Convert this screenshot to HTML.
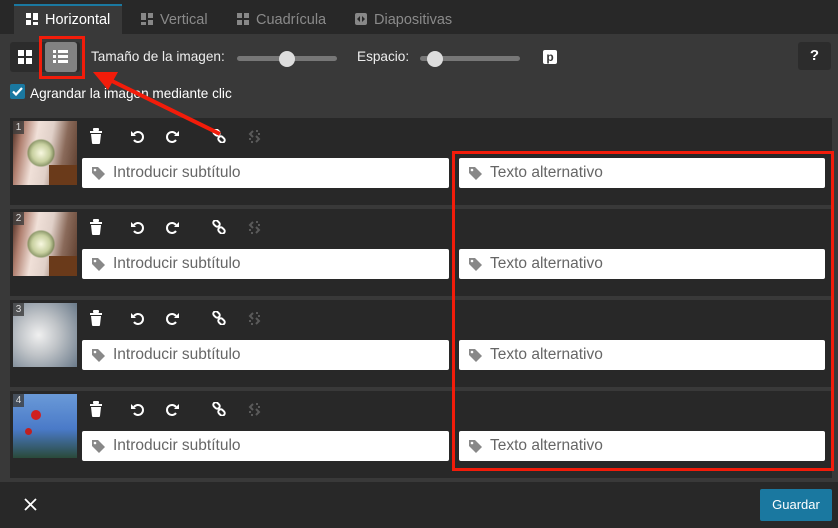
<!DOCTYPE html><html><head><meta charset="utf-8"><style>
*{margin:0;padding:0;box-sizing:border-box}
body{width:838px;height:528px;background:#393939;font-family:"Liberation Sans","DejaVu Sans",sans-serif;position:relative;overflow:hidden;color:#fff}
.a{position:absolute}
.tabbar{left:0;top:0;width:838px;height:34px;background:#282828}
.tab{top:6px;height:28px;font-size:14.5px;color:#8a8a8a;line-height:29px}
.row{left:10px;width:822px;height:87px;background:#282828}
.thumb{width:64px;height:64px;overflow:hidden}
.num{left:0;top:0;width:11px;height:13px;background:rgba(60,60,60,.8);font-size:10px;line-height:13px;text-align:center;color:#ddd}
.inp{height:30px;background:#fff;border-radius:2px;font-size:15.5px;color:#666;line-height:30px;padding-left:31px}
.tag{left:10px;top:9px}
</style></head><body>
<div class="a tabbar"></div>
<div class="a" style="left:14px;top:4px;width:108px;height:30px;background:#393939;border-top:2px solid #1a78a0"></div>
<div class="a tab" style="left:26px;color:#fff"><svg width="12" height="12" style="vertical-align:-1px;margin-right:7px"><rect x="0" y="0" width="5" height="5" fill="#fff"/><rect x="7" y="0" width="5" height="7" fill="#fff"/><rect x="0" y="7" width="5" height="5" fill="#fff"/><rect x="7" y="9" width="5" height="3" fill="#fff"/></svg>Horizontal</div>
<div class="a tab" style="left:141px"><svg width="12" height="12" style="vertical-align:-1px;margin-right:7px"><rect x="0" y="0" width="5" height="7" fill="#888"/><rect x="7" y="0" width="5" height="5" fill="#888"/><rect x="0" y="9" width="5" height="3" fill="#888"/><rect x="7" y="7" width="5" height="5" fill="#888"/></svg>Vertical</div>
<div class="a tab" style="left:237px"><svg width="12" height="12" style="vertical-align:-1px;margin-right:7px"><rect x="0" y="0" width="5" height="5" fill="#888"/><rect x="7" y="0" width="5" height="5" fill="#888"/><rect x="0" y="7" width="5" height="5" fill="#888"/><rect x="7" y="7" width="5" height="5" fill="#888"/></svg>Cuadrícula</div>
<div class="a tab" style="left:355px"><svg width="12" height="12" style="vertical-align:-1px;margin-right:7px"><rect x="0" y="0" width="12" height="12" rx="2" fill="#888"/><path d="M5 3L2 6L5 9ZM7 3L10 6L7 9Z" fill="#282828"/></svg>Diapositivas</div>

<div class="a" style="left:10px;top:42px;width:70px;height:30px;background:#2c2c2c;border-radius:3px"></div>
<svg class="a" style="left:18px;top:50px" width="14" height="14"><rect x="0" y="0" width="6" height="6" fill="#fff"/><rect x="8" y="0" width="6" height="6" fill="#fff"/><rect x="0" y="8" width="6" height="6" fill="#fff"/><rect x="8" y="8" width="6" height="6" fill="#fff"/></svg>
<div class="a" style="left:45px;top:42px;width:32px;height:30px;background:#828282;border-radius:3px"></div>
<svg class="a" style="left:53px;top:50px" width="15" height="14"><g fill="#fff"><rect x="0" y="0" width="3" height="3"/><rect x="0" y="5" width="3" height="3"/><rect x="0" y="10" width="3" height="3"/><rect x="5" y="0" width="10" height="3"/><rect x="5" y="5" width="10" height="3"/><rect x="5" y="10" width="10" height="3"/></g></svg>
<div class="a" style="left:39px;top:36px;width:46px;height:43px;border:3px solid #f21c0a"></div>
<div class="a" style="left:91px;top:49px;font-size:13.6px;color:#eee">Tamaño de la imagen:</div>
<div class="a" style="left:237px;top:56px;width:100px;height:5px;background:#777;border-radius:3px"></div>
<div class="a" style="left:279px;top:51px;width:16px;height:16px;background:#ddd;border-radius:50%"></div>
<div class="a" style="left:357px;top:49px;font-size:13.6px;color:#eee">Espacio:</div>
<div class="a" style="left:420px;top:56px;width:100px;height:5px;background:#777;border-radius:3px"></div>
<div class="a" style="left:427px;top:51px;width:16px;height:16px;background:#ddd;border-radius:50%"></div>
<div class="a" style="left:543px;top:50px;width:14px;height:14px;background:#fff;border-radius:2px;color:#393939;font-size:12px;font-weight:bold;text-align:center;line-height:14px">p</div>
<div class="a" style="left:798px;top:42px;width:33px;height:28px;background:#2c2c2c;border-radius:3px;font-weight:bold;font-size:15px;text-align:center;line-height:28px">?</div>
<div class="a" style="left:10px;top:84px;width:15px;height:15px;background:#1a78a0;border-radius:2px"><svg width="15" height="15"><path d="M3 7.5L6 10.5L12 4" stroke="#fff" stroke-width="2.2" fill="none"/></svg></div>
<div class="a" style="left:30px;top:86px;font-size:13.6px;color:#fff">Agrandar la imagen mediante clic</div>

<div id="rows"></div>
<script>
const imgs=[
"linear-gradient(100deg,#4a2a20 0%,#b08070 15%,#f0e0d8 35%,#e0d0c8 55%,#8a6a5a 75%,#5a3a2a 100%)",
"linear-gradient(100deg,#4a2a20 0%,#b08070 15%,#f0e0d8 35%,#e0d0c8 55%,#8a6a5a 75%,#5a3a2a 100%)",
"radial-gradient(circle at 40% 50%,#f0f0f0 0%,#c0c4c8 40%,#6a7a8a 100%)",
"linear-gradient(180deg,#6a9ad8 0%,#4a7ac8 55%,#2a4a3a 100%)"];
let h='';
for(let i=0;i<4;i++){
 const y=118+i*91;
 h+=`<div class="a row" style="top:${y}px"></div>
 <div class="a thumb" style="left:13px;top:${y+3}px;background:${imgs[i]}">${i<2?'<div class="a" style="left:14px;top:18px;width:28px;height:28px;background:radial-gradient(#f8f8e0,#c8d0a0 45%,rgba(90,120,50,.6) 65%,transparent 72%)"></div><div class="a" style="left:36px;top:44px;width:28px;height:20px;background:#6a3a1a"></div>':''}${i==3?'<div class="a" style="left:18px;top:16px;width:10px;height:10px;background:#d02020;border-radius:50%"></div><div class="a" style="left:12px;top:34px;width:7px;height:7px;background:#c02020;border-radius:50%"></div>':''}<div class="a num">${i+1}</div></div>
 <svg class="a" style="left:90px;top:${y+10}px" width="12" height="16"><rect x="3" y="0" width="6" height="3" rx="1" fill="#fff"/><rect x="0" y="3" width="12" height="2" fill="#fff"/><path d="M1 6H11L10 15Q10 16 9 16H3Q2 16 2 15Z" fill="#fff"/></svg>
 <svg class="a" style="left:131px;top:${y+12}px" width="13" height="13"><path d="M3 4A5 5 0 1 1 3 10" stroke="#fff" stroke-width="2" fill="none"/><path d="M0 1L0 6L5 6Z" fill="#fff"/></svg>
 <svg class="a" style="left:166px;top:${y+12}px" width="13" height="13"><path d="M10 4A5 5 0 1 0 10 10" stroke="#fff" stroke-width="2" fill="none"/><path d="M13 1L13 6L8 6Z" fill="#fff"/></svg>
 <svg class="a" style="left:212px;top:${y+11}px" width="14" height="14"><rect x="1" y="1" width="7" height="5" rx="2.5" transform="rotate(45 4.5 3.5)" stroke="#fff" stroke-width="2" fill="none"/><rect x="6" y="8" width="7" height="5" rx="2.5" transform="rotate(45 9.5 10.5)" stroke="#fff" stroke-width="2" fill="none"/></svg>
 <svg class="a" style="left:247px;top:${y+11}px" width="15" height="15"><path d="M6 2L3 5L6 8M9 7L12 10L9 13M2 10L4 10M11 5L13 5M5 12L5 14M10 1L10 3" stroke="#5a5a5a" stroke-width="2" fill="none"/></svg>
 <div class="a inp" style="left:82px;top:${y+40}px;width:367px">Introducir subtítulo<svg class="a tag" width="13" height="13"><path d="M0 0H6L13 7L7 13L0 6Z" fill="#888"/><circle cx="3" cy="3" r="1.3" fill="#fff"/></svg></div>
 <div class="a inp" style="left:459px;top:${y+40}px;width:366px">Texto alternativo<svg class="a tag" width="13" height="13"><path d="M0 0H6L13 7L7 13L0 6Z" fill="#888"/><circle cx="3" cy="3" r="1.3" fill="#fff"/></svg></div>`;
}
document.getElementById('rows').innerHTML=h;
</script>
<div class="a" style="left:452px;top:151px;width:382px;height:320px;border:3px solid #f21c0a"></div>
<svg class="a" style="left:0;top:0" width="838" height="528"><line x1="220" y1="134" x2="110" y2="80" stroke="#f21c0a" stroke-width="4"/><path d="M93 72L118 72L108 90Z" fill="#f21c0a"/></svg>

<div class="a" style="left:0;top:482px;width:838px;height:46px;background:#282828"></div>
<svg class="a" style="left:24px;top:498px" width="13" height="13"><path d="M1 1L12 12M12 1L1 12" stroke="#fff" stroke-width="1.8"/></svg>
<div class="a" style="left:760px;top:489px;width:72px;height:32px;background:#1a78a0;border-radius:2px;font-size:13px;text-align:center;line-height:32px">Guardar</div>
</body></html>
